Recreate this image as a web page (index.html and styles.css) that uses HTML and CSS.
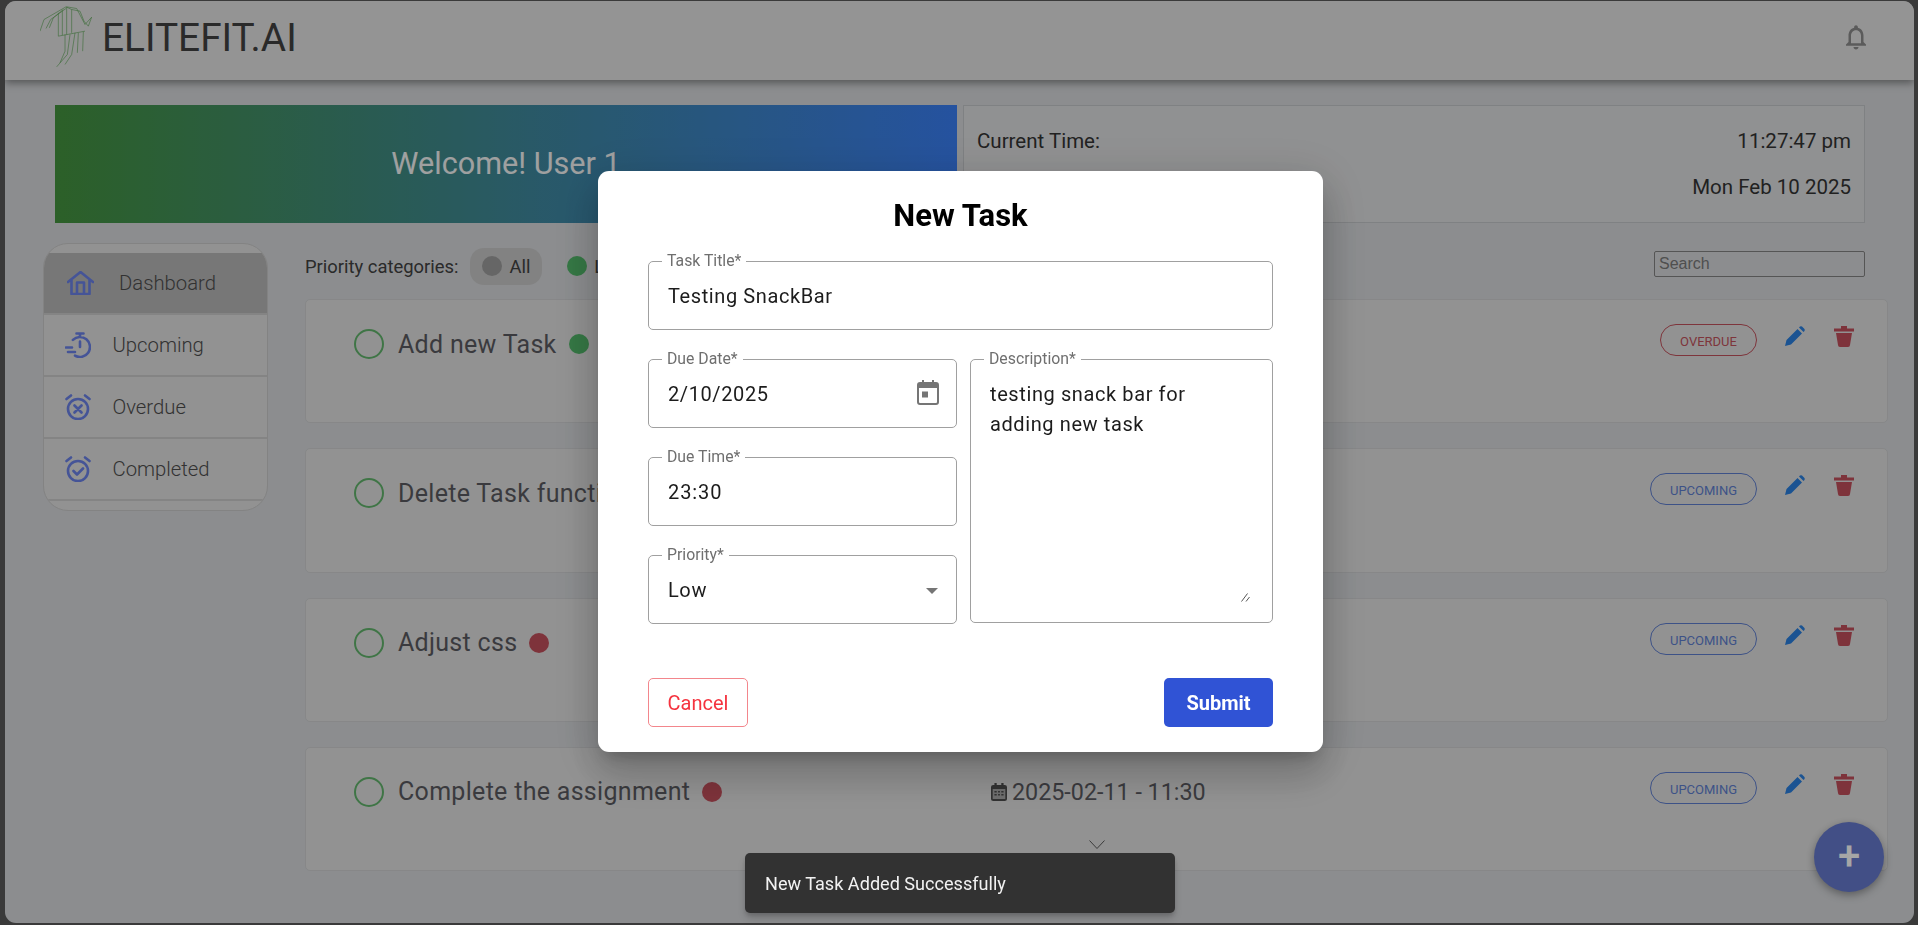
FILE: index.html
```html
<!DOCTYPE html>
<html lang="en">
<head>
<meta charset="utf-8">
<title>ELITEFIT.AI</title>
<link rel="stylesheet" href="styles.css">
</head>
<body>
<div class="shell">
  <header class="topbar">
    <div class="brand">
      <svg class="logo" viewBox="30 15 156 185" fill="none" stroke="#5fa858" stroke-width="1.9">
        <path d="M108 17 42 55 30 90M108 22 62 55 48 82M100 25 70 50 58 80"/>
        <path d="M110 17 140 22 165 70 185 48 175 75 162 60 150 30 125 25 108 17"/>
        <path d="M85 35V105L165 90M110 17V100M125 25V95M97 28V102"/>
        <path d="M160 92 158 150M145 95 142 155M135 95 125 160 105 190M120 100 112 160 80 197M105 100 105 150 90 185"/>
      </svg>
      <span class="brand-name">ELITEFIT.AI</span>
    </div>
    <svg class="bell" viewBox="0 0 24 24"><path d="M12 22c1.100 0 2-.9 2-2h-4c0 1.100.9 2 2 2zm6-6v-5c0-3.070-1.630-5.640-4.500-6.320V4c0-.83-.67-1.500-1.500-1.500s-1.500.67-1.500 1.500v.68C7.640 5.360 6 7.920 6 11v5l-2 2v1h16v-1l-2-2zm-2 1H8v-6c0-2.480 1.510-4.500 4-4.500s4 2.020 4 4.500v6z"/></svg>
  </header>

  <section class="hero">
    <div class="banner">Welcome! User 1</div>
    <div class="clock">
      <div class="clock-row"><span>Current Time:</span><span>11:27:47 pm</span></div>
      <div class="clock-row clock-date"><span>Mon Feb 10 2025</span></div>
    </div>
  </section>

  <section class="body-row">
    <nav class="sidebar">
      <a class="nav-item nav-active">
        <svg class="nav-icon home" viewBox="0 0 27 24"><path d="M1 11 13.500 1 26 11M4.500 9V23H22.500V9M10 23V11.500H17V23"/></svg>
        <span>Dashboard</span>
      </a>
      <a class="nav-item">
        <svg class="nav-icon" viewBox="0 0 26 26"><path d="M11.500 1.500H18.500M15 1.500V5M7.900 7.900A10 10 0 1 1 10 23.700M15 9.500V15M1 15.500H7M3 20H10"/></svg>
        <span>Upcoming</span>
      </a>
      <a class="nav-item">
        <svg class="nav-icon" viewBox="0 0 26 26"><circle cx="13" cy="15" r="10"/><path d="M1.500 5 6 1.500M24.500 5 20 1.500M9.500 11.500 16.500 18.500M16.500 11.500 9.500 18.500"/></svg>
        <span>Overdue</span>
      </a>
      <a class="nav-item">
        <svg class="nav-icon" viewBox="0 0 26 26"><circle cx="13" cy="15" r="10"/><path d="M1.500 5 6 1.500M24.500 5 20 1.500M8.500 15 12 18.500 18 12.500"/></svg>
        <span>Completed</span>
      </a>
    </nav>

    <div class="tasks">
      <div class="filters">
        <span class="filter-label">Priority categories:</span>
        <span class="filter filter-on"><i class="dot dot-grey"></i>All</span>
        <span class="filter"><i class="dot dot-green"></i>Low</span>
        <input class="search" type="text" placeholder="Search">
      </div>

      <article class="card">
        <div class="card-row">
          <div class="card-title"><i class="ring"></i><span>Add new Task</span><i class="dot dot-green"></i></div>
          <span class="chip chip-overdue">Overdue</span>
          <svg class="pencil" viewBox="0 0 20 20"><path d="M0 20 1.500 14 12.500 3 17 7.500 6 18.500ZM14 1.500 15 .5Q16 0 17 .5L19.500 3Q20 4 19.500 5L18.500 6Z"/></svg>
          <svg class="trash" viewBox="0 0 20 21"><path d="M7 0H13V2.500H20V5.500H0V2.500H7ZM2 7H18L16 19Q16 21 14 21H6Q4 21 4 19Z"/></svg>
        </div>
        <svg class="chevron" viewBox="0 0 16 9"><path d="M.5 .5 8 8.500 15.500 .5"/></svg>
      </article>

      <article class="card">
        <div class="card-row">
          <div class="card-title"><i class="ring"></i><span>Delete Task function</span></div>
          <span class="chip chip-upcoming">Upcoming</span>
          <svg class="pencil" viewBox="0 0 20 20"><path d="M0 20 1.500 14 12.500 3 17 7.500 6 18.500ZM14 1.500 15 .5Q16 0 17 .5L19.500 3Q20 4 19.500 5L18.500 6Z"/></svg>
          <svg class="trash" viewBox="0 0 20 21"><path d="M7 0H13V2.500H20V5.500H0V2.500H7ZM2 7H18L16 19Q16 21 14 21H6Q4 21 4 19Z"/></svg>
        </div>
        <svg class="chevron" viewBox="0 0 16 9"><path d="M.5 .5 8 8.500 15.500 .5"/></svg>
      </article>

      <article class="card">
        <div class="card-row">
          <div class="card-title"><i class="ring"></i><span>Adjust css</span><i class="dot dot-red"></i></div>
          <span class="chip chip-upcoming">Upcoming</span>
          <svg class="pencil" viewBox="0 0 20 20"><path d="M0 20 1.500 14 12.500 3 17 7.500 6 18.500ZM14 1.500 15 .5Q16 0 17 .5L19.500 3Q20 4 19.500 5L18.500 6Z"/></svg>
          <svg class="trash" viewBox="0 0 20 21"><path d="M7 0H13V2.500H20V5.500H0V2.500H7ZM2 7H18L16 19Q16 21 14 21H6Q4 21 4 19Z"/></svg>
        </div>
        <svg class="chevron" viewBox="0 0 16 9"><path d="M.5 .5 8 8.500 15.500 .5"/></svg>
      </article>

      <article class="card">
        <div class="card-row">
          <div class="card-title"><i class="ring"></i><span>Complete the assignment</span><i class="dot dot-red"></i></div>
          <div class="card-date">
            <svg class="cal" viewBox="0 0 14 18" preserveAspectRatio="none"><path class="cal-body" d="M3 0H5V2H9V0H11V2H12Q14 2 14 4V16Q14 18 12 18H2Q0 18 0 16V4Q0 2 2 2H3Z"/><rect class="cal-face" x="1.500" y="6" width="11" height="10"/><path class="cal-body" d="M3 8H5V9.500H3ZM6.200 8H7.800V9.500H6.200ZM9 8H11V9.500H9ZM3 11H5V12.500H3ZM6.200 11H7.800V12.500H6.200ZM9 11H11V12.500H9Z"/></svg>
            <span>2025-02-11 - 11:30</span>
          </div>
          <span class="chip chip-upcoming">Upcoming</span>
          <svg class="pencil" viewBox="0 0 20 20"><path d="M0 20 1.500 14 12.500 3 17 7.500 6 18.500ZM14 1.500 15 .5Q16 0 17 .5L19.500 3Q20 4 19.500 5L18.500 6Z"/></svg>
          <svg class="trash" viewBox="0 0 20 21"><path d="M7 0H13V2.500H20V5.500H0V2.500H7ZM2 7H18L16 19Q16 21 14 21H6Q4 21 4 19Z"/></svg>
        </div>
        <svg class="chevron" viewBox="0 0 16 9"><path d="M.5 .5 8 8.500 15.500 .5"/></svg>
      </article>
    </div>
  </section>

  <button class="fab" type="button">+</button>
</div>

<div class="backdrop"></div>

<form class="dialog">
  <h2 class="dialog-title">New Task</h2>
  <div class="field"><label class="field-label">Task Title*</label><div class="field-value">Testing SnackBar</div></div>
  <div class="form-grid">
    <div class="form-col">
      <div class="field">
        <label class="field-label">Due Date*</label>
        <div class="field-value">2/10/2025</div>
        <svg class="field-icon" viewBox="0 0 22 25"><path fill-rule="evenodd" d="M5 0h2v2h8V0h2v2h2a3 3 0 0 1 3 3v17a3 3 0 0 1-3 3H3a3 3 0 0 1-3-3V5a3 3 0 0 1 3-3h2ZM2 8v14a1 1 0 0 0 1 1h16a1 1 0 0 0 1-1V8Z"/><rect x="5" y="11.500" width="6" height="6"/></svg>
      </div>
      <div class="field"><label class="field-label">Due Time*</label><div class="field-value field-time">23:30</div></div>
      <div class="field">
        <label class="field-label">Priority*</label>
        <div class="field-value">Low</div>
        <i class="select-arrow"></i>
      </div>
    </div>
    <div class="field field-text">
      <label class="field-label">Description*</label>
      <div class="field-value">testing snack bar for<br>adding new task</div>
      <svg class="resize" viewBox="0 0 9 9"><path d="M.5 8.500 6.500 .5M5 8.500 8.500 4"/></svg>
    </div>
  </div>
  <div class="actions">
    <button class="btn btn-cancel" type="button">Cancel</button>
    <button class="btn btn-submit" type="button">Submit</button>
  </div>
</form>

<div class="snackbar">New Task Added Successfully</div>
</body>
</html>
```
FILE: styles.css
```css
* { box-sizing: border-box; }
html, body { height: 100%; }
body {
  margin: 0;
  background: #595959;
  font-family: Roboto, "Liberation Sans", sans-serif;
  overflow: hidden;
}
.shell {
  position: relative;
  margin: 1px 4px 0 5px;
  height: 922px;
  border-radius: 11px;
  background: #d7d9dc;
  overflow: hidden;
}
.topbar {
  height: 79px;
  padding: 0 43px 7px 35px;
  display: flex;
  align-items: center;
  justify-content: space-between;
  background: #e4e4e4;
  box-shadow: 0 3px 8px rgba(0,0,0,.4);
  position: relative;
}
.brand { display: flex; align-items: center; gap: 10px; }
.logo { width: 52px; height: 62px; }
.brand-name { font-size: 38.800px; color: #414141; }
.bell { width: 30px; height: 30px; fill: #8c8c8c; }

.hero { display: flex; gap: 6px; margin: 25px 0 0 50px; height: 118px; }
.banner {
  width: 902px;
  padding-bottom: 2px;
  display: flex; align-items: center; justify-content: center;
  font-size: 30.600px; color: #f4f6f6;
  background: linear-gradient(90deg, #44943e, #3a7ff5);
}
.clock {
  width: 902px;
  border: 1px solid #c3c6c9;
  background: #dedfe0;
  padding: 12px 13px 0;
  color: #343434;
  font-size: 20.500px;
}
.clock-row { display: flex; justify-content: space-between; height: 46px; align-items: center; }
.clock-date { justify-content: flex-end; }

.body-row { display: flex; margin: 20px 0 0 38px; }
.sidebar {
  width: 225px; height: 268px;
  margin-right: 37px;
  padding-top: 9px;
  border: 1px solid #c9c9c9;
  border-radius: 25px;
  background: #e0e0e0;
  overflow: hidden;
  flex: none;
}
.nav-item {
  display: flex; align-items: center; gap: 21.500px;
  height: 62px; padding: 0 0 1px 21px;
  border-bottom: 2px solid #cbcbcb;
  font-size: 20.300px; font-weight: 300; color: #4e4e4e;
}
.nav-active { background: #b7b7b7; gap: 25px; padding-left: 23px; }
.nav-icon { width: 26px; height: 26px; fill: none; stroke: #6a82e8; stroke-width: 2.600; flex: none; stroke-linecap: round; stroke-linejoin: round; }
.home { width: 27px; height: 24px; }

.tasks { width: 1583px; flex: none; }
.filters { display: flex; align-items: center; height: 37px; margin: 5px 0 14px; padding: 0 23px 1px 0; font-size: 18.400px; color: #414141; }
.filter-label { margin-right: 12px; }
.filter { display: flex; align-items: center; height: 37px; padding: 0 12px; gap: 7px; border-radius: 14px; margin-right: 13px; }
.filter-on { background: #c8c8c8; }
.search {
  align-self: flex-start;
  margin: 3px 0 0 auto;
  width: 211px; height: 26px;
  padding: 0 4px;
  border: 1px solid #838383;
  border-radius: 2px;
  background: transparent;
  font: 16px "Liberation Sans", sans-serif;
}
.search::placeholder { color: #7a7a7a; }
.dot { display: block; width: 20px; height: 20px; border-radius: 50%; flex: none; }
.dot-grey { background: #9d9d9d; }
.dot-green { background: #52b86a; }
.dot-red { background: #c24f5b; }

.card {
  height: 124.300px;
  margin-bottom: 25px;
  display: flex; flex-direction: column;
  border: 1px solid #cfd0d2;
  border-radius: 5px;
  background: #e1e1e1;
  padding: 24px 33px 21px 48px;
}
.card-row { display: flex; align-items: flex-start; }
.card-title { width: 635px; display: flex; align-items: center; height: 34px; margin-top: 3px; font-size: 25px; letter-spacing: .3px; color: #5a5a60; flex: none; }
.card-title span { margin: 0 12px 0 14px; white-space: nowrap; }
.ring { display: block; width: 30px; height: 30px; border: 2px solid #62b46c; border-radius: 50%; flex: none; }
.card-date { display: flex; align-items: center; gap: 5px; height: 34px; margin: 3px 0 0 2px; font-size: 23.300px; color: #5a5a60; }
.cal { width: 16px; height: 18px; }
.cal-body { fill: #4d4d4d; }
.cal-face { fill: #aaa; }
.chip {
  margin-left: auto;
  display: flex; align-items: center; justify-content: center;
  height: 32px; padding: 3px 16px 0;
  border: 1px solid;
  border-radius: 16px;
  font-size: 13px;
  text-transform: uppercase;
}
.chip-overdue { width: 97px; color: #c2525c; border-color: #c2525c; }
.chip-upcoming { width: 107px; color: #5f7fd0; border-color: #5f7fd0; }
.pencil { width: 20px; height: 20px; margin: 2px 0 0 28px; fill: #2a80e0; flex: none; }
.trash { width: 20px; height: 21px; margin: 2px 0 0 29px; fill: #c24f5b; flex: none; }
.chevron { width: 16px; height: 9px; margin: auto 15px 0 0; align-self: center; fill: none; stroke: #5a5a5a; flex: none; }

.fab {
  position: absolute; right: 30px; bottom: 31px;
  width: 70px; height: 70px;
  border: 0; border-radius: 50%;
  background: #667ace; color: #fff;
  font: 500 40px Roboto, sans-serif; line-height: 1;
  box-shadow: 0 3px 8px rgba(0,0,0,.35);
}
.backdrop { position: fixed; inset: 0; background: rgba(0,0,0,.35); }

.dialog {
  position: fixed; left: 598px; top: 171px;
  width: 725px; height: 581px;
  padding: 0 50px;
  background: #fff;
  border-radius: 11px;
  box-shadow: 0 11px 15px -7px rgba(0,0,0,.2), 0 24px 38px 3px rgba(0,0,0,.14), 0 9px 46px 8px rgba(0,0,0,.12);
}
.dialog-title { margin: 0; height: 90px; padding-top: 26px; text-align: center; font-size: 31px; line-height: 38px; font-weight: 700; color: #000; }
.field {
  position: relative;
  height: 69px;
  display: flex; align-items: center;
  padding: 0 19px;
  border: 1px solid #a0a0a0;
  border-radius: 5px;
}
.field-label {
  position: absolute; left: 13px; top: -10px;
  padding: 0 5px;
  background: #fff;
  font-size: 15.800px; line-height: 18px; color: #6f6f6f;
}
.field-value { font-size: 20px; letter-spacing: .6px; color: #1c1c1c; }
.field-time { letter-spacing: .9px; }
.form-grid { display: grid; grid-template-columns: 309px 303px; gap: 13px; margin-top: 29px; }
.form-col { display: flex; flex-direction: column; gap: 29px; }
.field-text { height: 264px; align-items: flex-start; padding-top: 19px; }
.field-text .field-value { line-height: 30px; }
.field-icon { position: absolute; right: 17px; top: 20px; width: 22px; height: 25px; fill: #757575; }
.select-arrow { position: absolute; right: 18px; top: 32px; border: solid transparent; border-width: 6px 6.500px 0; border-top-color: #757575; }
.resize { position: absolute; right: 22px; bottom: 20px; width: 9px; height: 9px; fill: none; stroke: #555; }
.actions { display: flex; justify-content: space-between; margin-top: 54px; }
.btn { height: 49px; border-radius: 5px; font: 400 20px Roboto, sans-serif; }
.btn-cancel { width: 100px; background: #fff; color: #f5333f; border: 1px solid #f3868c; }
.btn-submit { width: 109px; background: #3053d5; color: #fff; border: 0; font-weight: 700; }

.snackbar {
  position: fixed; left: 745px; top: 853px;
  width: 430px; height: 60px;
  display: flex; align-items: center;
  padding: 0 20px;
  background: #323232;
  color: #f2f2f2;
  border-radius: 5px;
  font-size: 18.100px;
  box-shadow: 0 3px 5px -1px rgba(0,0,0,.2), 0 6px 10px rgba(0,0,0,.14);
}
```
